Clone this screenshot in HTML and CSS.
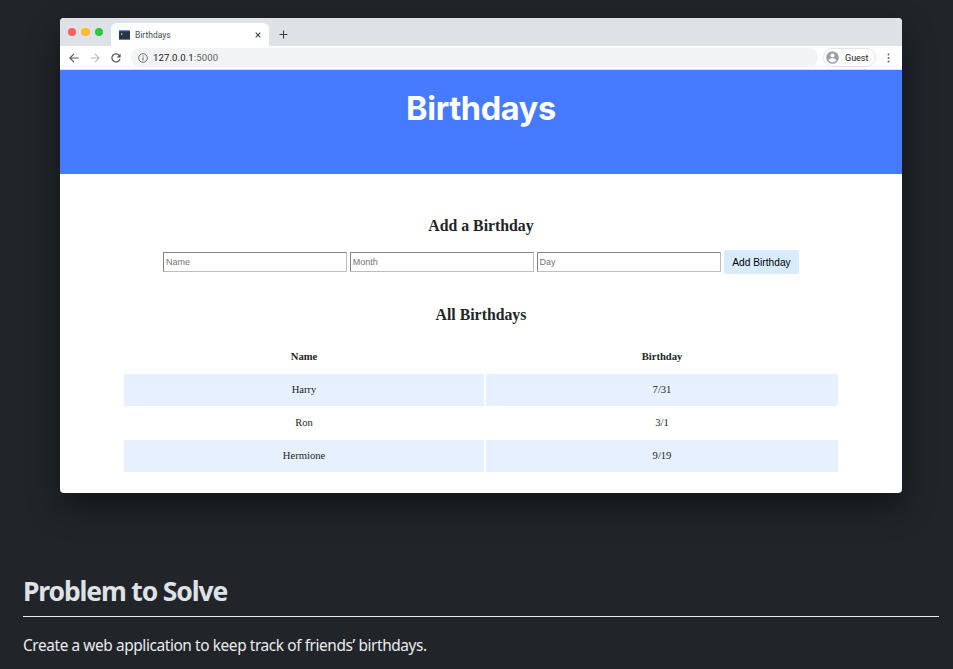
FILE: index.html
```html
<!DOCTYPE html>
<html lang="en">
<head>
<meta charset="utf-8">
<title>Birthdays</title>
<link rel="stylesheet" href="styles.css">
</head>
<body>
<main>
  <div class="window">
    <div class="tabs">
      <div class="lights"><i class="red"></i><i class="yellow"></i><i class="green"></i></div>
      <div class="tab">
        <svg class="favicon" width="11" height="10" viewBox="0 0 11 10"><rect width="11" height="10" rx=".6" fill="#6d94c7"/><rect y="1.2" width="11" height="8" fill="#293443"/><path d="M2 3l1.3 1L2 5" fill="none" stroke="#dfe7ee" stroke-width=".7"/></svg>
        <span class="tab-title">Birthdays</span>
        <svg class="close" width="6" height="6" viewBox="0 0 6 6"><path d="M.7.7l4.6 4.6M5.3.7L.7 5.3" stroke="#3c4043" stroke-width="1.1"/></svg>
      </div>
      <svg class="plus" width="9" height="9" viewBox="0 0 9 9"><path d="M4.5.5v8M.5 4.5h8" stroke="#3c4043" stroke-width="1.1"/></svg>
    </div>
    <div class="toolbar">
      <svg class="nav" width="10" height="10" viewBox="0 0 10 10" fill="none" stroke="#50555a" stroke-width="1.1"><path d="M9.6 5H1M5 .8L.8 5 5 9.2"/></svg>
      <svg class="nav" width="10" height="10" viewBox="0 0 10 10" fill="none" stroke="#b5b8bc" stroke-width="1.1"><path d="M.4 5H9M5 .8L9.2 5 5 9.2"/></svg>
      <svg class="nav" width="10" height="10" viewBox="0 0 10 10" fill="none" stroke="#50555a" stroke-width="1.2"><path d="M8.3 2.4A4.1 4.1 0 1 0 9 6"/><path d="M9.6.4v4H5.7z" fill="#50555a" stroke="none"/></svg>
      <div class="address">
        <svg width="10" height="10" viewBox="0 0 10 10"><circle cx="5" cy="5" r="4.3" fill="none" stroke="#5f6368" stroke-width=".9"/><path d="M5 4.5v3M5 2.5v1.1" stroke="#5f6368" stroke-width="1"/></svg>
        <span><b>127.0.0.1</b>:5000</span>
      </div>
      <div class="guest">
        <svg width="13" height="13" viewBox="0 0 13 13"><circle cx="6.5" cy="6.5" r="6.3" fill="#9aa0a6"/><circle cx="6.5" cy="4.5" r="2" fill="#fff"/><path d="M2.7 9.5c0-3 7.6-3 7.6 0-1.8 2.4-5.8 2.4-7.6 0z" fill="#fff"/></svg>
        <span>Guest</span>
      </div>
      <svg class="more" width="3" height="10" viewBox="0 0 3 10" fill="#5f6368"><circle cx="1.5" cy="1.4" r="1"/><circle cx="1.5" cy="5" r="1"/><circle cx="1.5" cy="8.6" r="1"/></svg>
    </div>
    <div class="banner"><h1>Birthdays</h1></div>
    <div class="content">
      <h2>Add a Birthday</h2>
      <form class="form">
        <input placeholder="Name"><input placeholder="Month"><input placeholder="Day">
        <button type="button">Add Birthday</button>
      </form>
      <h2>All Birthdays</h2>
      <div class="table">
        <b>Name</b><b>Birthday</b>
        <span class="tint">Harry</span><span class="tint">7/31</span>
        <span>Ron</span><span>3/1</span>
        <span class="tint">Hermione</span><span class="tint">9/19</span>
      </div>
    </div>
  </div>
  <h2 class="section"><span>Problem to Solve</span></h2>
  <p class="lead">Create a web application to keep track of friends’ birthdays.</p>
</main>
</body>
</html>
```
FILE: styles.css
```css
* { box-sizing: border-box; }
body { margin: 0; background: #212529; overflow: hidden; }
main { height: 669px; padding: 18px 14px 0 23px; }
svg { display: block; flex: none; }

.window {
  width: 842px;
  height: 475px;
  margin-left: 37px;
  background: #fff;
  border-radius: 4px;
  overflow: hidden;
  box-shadow: 0 14px 32px rgba(0, 0, 0, .43);
  color: #212529;
  font-family: "Liberation Serif", serif;
}

.tabs { display: flex; height: 28px; background: #dee1e6; }
.lights { display: flex; gap: 5px; width: 51px; padding: 10px 0 0 8px; }
.lights i { width: 8.4px; height: 8.4px; border-radius: 50%; }
.red { background: #ff5f57; }
.yellow { background: #febc2e; }
.green { background: #28c840; }
.tab {
  display: flex;
  align-items: center;
  width: 158px;
  height: 23px;
  margin-top: 5px;
  padding: 0 8px;
  background: #fff;
  border-radius: 6px 6px 0 0;
  font: 8.5px Roboto, sans-serif;
  color: #45494d;
}
.tab-title { margin-left: 5px; }
.close { margin-left: auto; }
.plus { margin: 12px 0 0 10px; }

.toolbar {
  display: flex;
  align-items: center;
  height: 24px;
  padding: 0 12px 0 9px;
  border-bottom: 1px solid #dcdee2;
  font-family: Roboto, sans-serif;
}
.nav { margin-right: 11px; }
.address {
  display: flex;
  flex: 1;
  align-items: center;
  gap: 5px;
  height: 19px;
  margin-right: 5px;
  margin-left: -1px;
  padding-left: 7px;
  border-radius: 10px;
  background: #f1f3f4;
  font-size: 9.6px;
  letter-spacing: .1px;
  color: #5f6368;
}
.address b { font-weight: 400; color: #202124; }
.guest {
  display: flex;
  align-items: center;
  gap: 6px;
  width: 53px;
  height: 19px;
  padding-left: 2px;
  border: 1px solid #e2e4e7;
  border-radius: 10px;
  font-size: 9px;
  color: #202124;
}
.more { margin-left: 11px; }

.banner { height: 104px; padding-top: 19px; background: #467aff; }
.banner h1 {
  margin: 0;
  font: 700 32.5px/40px Inter, sans-serif;
  letter-spacing: -.35px;
  text-align: center;
  color: #fff;
}

.content { padding-top: 42px; }
.content h2 { margin: 0; font-size: 15.8px; line-height: 20px; text-align: center; }
.form {
  display: flex;
  align-items: center;
  gap: 2.5px;
  height: 24px;
  margin: 14px 103px 31px;
}
.form input {
  width: 184.3px;
  height: 20px;
  padding: 0 2px;
  border: 1px solid;
  border-color: #858585 #bdbdbd #bdbdbd #858585;
  border-radius: 1px;
  font: 9px "Liberation Sans", sans-serif;
}
.form input::placeholder { color: #757575; opacity: 1; }
.form button {
  width: 75px;
  height: 24px;
  margin-left: auto;
  padding: 0;
  border: 0;
  border-radius: 2px;
  background: #d9ebff;
  font: 10.2px "Liberation Sans", sans-serif;
  color: #000;
}
.table {
  display: grid;
  grid-template-columns: 360px 352px;
  grid-auto-rows: 32px;
  gap: 1px 2px;
  margin: 16px 64px 0;
  font-size: 10.6px;
  line-height: 32px;
  text-align: center;
}
.tint { background: #e7f0ff; }

.section {
  height: 48px;
  margin: 76px 0 0;
  border-bottom: 1px solid #e9ecef;
  font: 700 26.5px/45px "Noto Sans", sans-serif;
  color: #dee2e6;
}
.section span { letter-spacing: -1.15px; }
.lead {
  margin: 17px 0 0;
  font: 15.4px/24px "Noto Sans", sans-serif;
  letter-spacing: -.4px;
  color: #e9ecef;
}
```
